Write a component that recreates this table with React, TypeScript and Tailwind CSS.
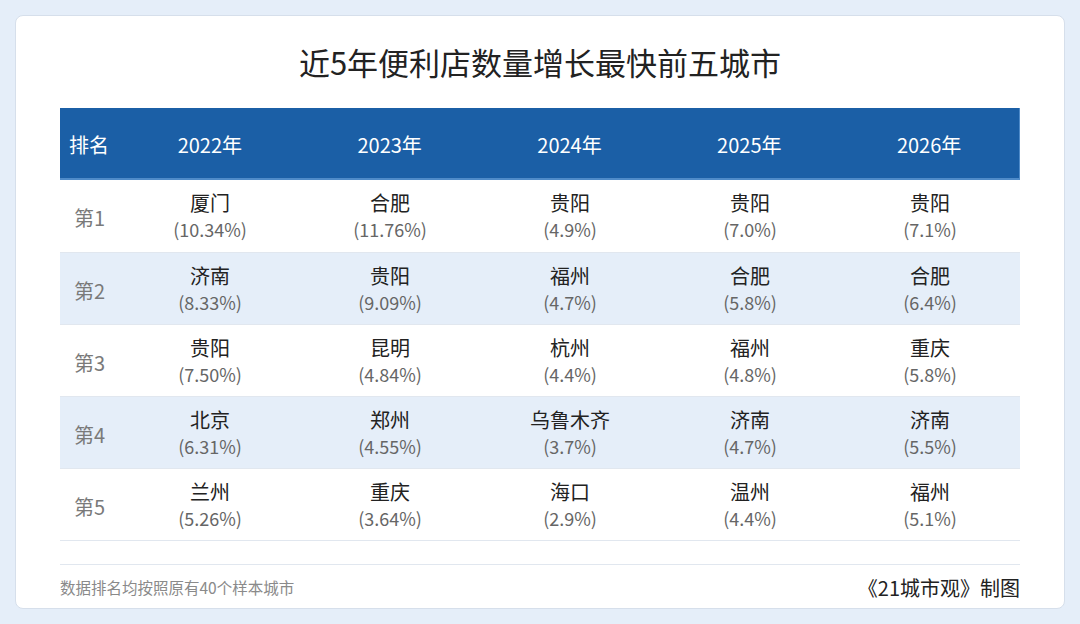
const years = ["2022年", "2023年", "2024年", "2025年", "2026年"];

const rows: [string, string][][] = [
  [["厦门", "10.34%"], ["合肥", "11.76%"], ["贵阳", "4.9%"], ["贵阳", "7.0%"], ["贵阳", "7.1%"]],
  [["济南", "8.33%"], ["贵阳", "9.09%"], ["福州", "4.7%"], ["合肥", "5.8%"], ["合肥", "6.4%"]],
  [["贵阳", "7.50%"], ["昆明", "4.84%"], ["杭州", "4.4%"], ["福州", "4.8%"], ["重庆", "5.8%"]],
  [["北京", "6.31%"], ["郑州", "4.55%"], ["乌鲁木齐", "3.7%"], ["济南", "4.7%"], ["济南", "5.5%"]],
  [["兰州", "5.26%"], ["重庆", "3.64%"], ["海口", "2.9%"], ["温州", "4.4%"], ["福州", "5.1%"]],
];

export default function App() {
  return (
    <div
      className="w-[1080px] h-[624px] bg-[#e5eef9] p-[15px]"
      style={{ fontFamily: '"Noto Sans CJK SC", "Noto Sans", sans-serif' }}
    >
      <div className="h-[594px] bg-white rounded-[8px] border border-[#d6dfeb] px-[44px] pt-[24px]">
        <h1 className="text-center text-[31px] leading-[44px] text-[#222]">近5年便利店数量增长最快前五城市</h1>

        <div className="mt-[24px] border-b border-[#e1e7ef]">
          {/* header */}
          <div className="flex h-[72px] pt-[4px] bg-[#1b5fa6] border-b-2 border-r border-[#4f8bc9] text-white text-[20px] items-center">
            <div className="w-[60px] pl-[9px]">排名</div>
            {years.map((y) => (
              <div key={y} className="w-[180px] text-center">{y}</div>
            ))}
          </div>

          {rows.map((row, i) => (
            <div
              key={i}
              className={`flex h-[72px] items-center ${i > 0 ? "border-t border-[#e1e7ef]" : ""} ${i % 2 === 1 ? "bg-[#e5eef9]" : "bg-white"}`}
            >
              <div className="w-[60px] pl-[14px] pt-[4px] text-[20px] text-[#7a7a7a]">第{i + 1}</div>
              {row.map(([city, pct], j) => (
                <div key={j} className="w-[180px] text-center">
                  <div className="text-[20px] leading-[26px] text-[#222]">{city}</div>
                  <div className="text-[18px] leading-[26px] text-[#666]">({pct})</div>
                </div>
              ))}
            </div>
          ))}
        </div>

        <div className="mt-[23px] border-t border-[#e1e7ef] flex justify-between items-center pt-[8px]">
          <span className="text-[15.5px] text-[#8a8a8a]">数据排名均按照原有40个样本城市</span>
          <span className="text-[20px] text-[#222]">《21城市观》制图</span>
        </div>
      </div>
    </div>
  );
}
